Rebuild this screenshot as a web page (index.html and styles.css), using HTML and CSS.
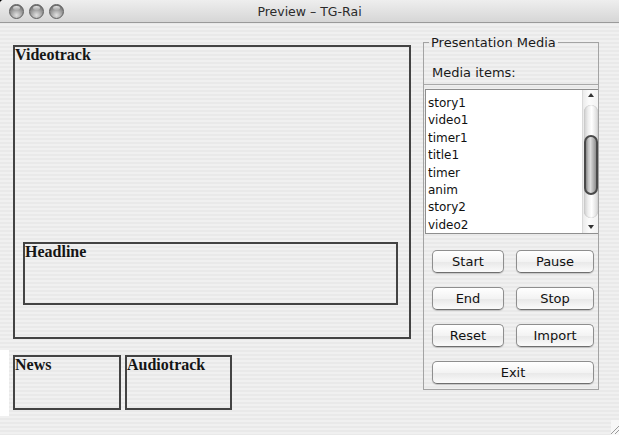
FILE: index.html
```html
<!DOCTYPE html>
<html lang="it">
<head>
<meta charset="utf-8">
<title>Preview – TG-Rai</title>
<link rel="stylesheet" href="styles.css">
</head>
<body>
<div class="window">
  <header class="titlebar">
    <div class="lights">
      <span class="light"></span>
      <span class="light"></span>
      <span class="light"></span>
    </div>
    <div class="title">Preview – TG-Rai</div>
  </header>

  <div class="content">
    <section class="stage">
      <div class="region videotrack">
        <span class="region-label">Videotrack</span>
        <div class="region headline">
          <span class="region-label">Headline</span>
        </div>
      </div>
      <div class="lower">
        <span class="edge"></span>
        <div class="region news"><span class="region-label">News</span></div>
        <div class="region audiotrack"><span class="region-label">Audiotrack</span></div>
      </div>
    </section>

    <fieldset class="media">
      <legend>Presentation Media</legend>
      <div class="items-head">Media items:</div>
      <div class="items">
        <ul class="item-list">
          <li>story1</li>
          <li>video1</li>
          <li>timer1</li>
          <li>title1</li>
          <li>timer</li>
          <li>anim</li>
          <li>story2</li>
          <li>video2</li>
        </ul>
        <div class="scrollbar">
          <span class="arrow up"></span>
          <div class="track"><div class="thumb"></div></div>
          <span class="arrow down"></span>
        </div>
      </div>
      <div class="controls">
        <button class="btn">Start</button>
        <button class="btn">Pause</button>
        <button class="btn">End</button>
        <button class="btn">Stop</button>
        <button class="btn">Reset</button>
        <button class="btn">Import</button>
        <button class="btn wide">Exit</button>
      </div>
    </fieldset>
  </div>

  <svg class="grip" width="8" height="15" viewBox="0 0 8 15">
    <rect width="8" height="15" fill="#f7f7f7"/>
    <line x1="8" y1="6" x2="0" y2="14" stroke="#9a9a9a" stroke-width="1"/>
    <line x1="8" y1="10" x2="4" y2="14" stroke="#9a9a9a" stroke-width="1"/>
  </svg>
</div>
</body>
</html>
```

FILE: styles.css
```css
html, body {
  margin: 0;
  padding: 0;
  background: #000;
}

.window {
  position: relative;
  width: 619px;
  height: 435px;
  overflow: hidden;
  border-top-left-radius: 4px;
  background: repeating-linear-gradient(to bottom, #f0f0f0 0 2px, #e9e9e9 2px 4px);
  font-family: "DejaVu Sans", "Noto Sans", sans-serif;
  color: #1a1a1a;
}

/* ---- title bar ---- */
.titlebar {
  height: 22px;
  border-bottom: 1px solid #9a9a9a;
  background: linear-gradient(to bottom, #eeeeee, #d6d6d6);
  display: grid;
  grid-template-columns: 1fr auto 1fr;
  align-items: center;
}

.lights {
  display: flex;
  gap: 5px;
  padding: 1px 0 0 9px;
}

.light {
  position: relative;
  width: 15px;
  height: 15px;
  box-sizing: border-box;
  border-radius: 50%;
  border: 1px solid #5f5f5f;
  background: radial-gradient(circle at 50% 78%, #e2e2e2 0, #b0b0b0 35%, #7d7d7d 70%, #616161 100%);
}

.light::before {
  content: "";
  position: absolute;
  left: 3px;
  top: 1px;
  width: 7px;
  height: 4px;
  border-radius: 50%;
  background: linear-gradient(to bottom, rgba(255,255,255,0.85), rgba(255,255,255,0.1));
}

.title {
  font-size: 12.5px;
  color: #2b2b2b;
  padding-top: 1px;
}

/* ---- main area ---- */
.content {
  display: flex;
  align-items: flex-start;
}

.stage {
  width: 411px;
  padding-top: 22px;
}

.region {
  box-sizing: border-box;
  border: 2px solid #434343;
}

.region-label {
  display: block;
  font: bold 16px/15px "Liberation Serif", "Times New Roman", serif;
  color: #151515;
}

.videotrack {
  margin-left: 13px;
  width: 398px;
  height: 294px;
  display: flex;
  flex-direction: column;
}

.headline {
  margin: auto 0 32px 8px;
  width: 375px;
  height: 63px;
}

.lower {
  display: flex;
  align-items: flex-start;
  margin-top: 11px;
}

.edge {
  width: 9px;
  height: 66px;
  background: #fff;
}

.news,
.audiotrack {
  margin: 5px 0 0 4px;
  height: 55px;
}

.news { width: 108px; }
.audiotrack { width: 107px; }

/* ---- presentation media group ---- */
.media {
  margin: 12px 0 0 12px;
  width: 176px;
  box-sizing: border-box;
  min-width: 0;
  padding: 0 0 5px;
  border: 1px solid #a3a3a3;
}

.media legend {
  margin-left: 5px;
  padding: 0 2px;
  font-size: 13px;
  line-height: 15px;
  color: #1a1a1a;
}

.items-head {
  padding: 15px 0 4px 8px;
  font-size: 13px;
  line-height: 15px;
  border-bottom: 1px solid #a9a9a9;
}

.items {
  margin: 4px 0 0 1px;
  height: 145px;
  box-sizing: border-box;
  border: 1px solid #8f8f8f;
  border-right: 0;
  background: #fff;
  display: flex;
}

.item-list {
  flex: 1;
  margin: 0;
  padding: 5px 0 0 2px;
  list-style: none;
  font-size: 12px;
  line-height: 17.4px;
  color: #111;
  overflow: hidden;
}

.scrollbar {
  width: 16px;
  box-sizing: border-box;
  border-left: 1px solid #dadada;
  display: flex;
  flex-direction: column;
  align-items: center;
  background: linear-gradient(to right, #ebebeb, #fbfbfb 40%, #f2f2f2);
}

.arrow {
  width: 0;
  height: 0;
  border-left: 3px solid transparent;
  border-right: 3px solid transparent;
}

.arrow.up {
  margin-top: 3px;
  border-bottom: 4px solid #333;
}

.arrow.down {
  margin-top: 7px;
  border-top: 4px solid #333;
}

.track {
  margin-top: 8px;
  width: 14px;
  height: 113px;
  border-radius: 7px;
  background: linear-gradient(to right, #cdcdcd, #efefef 30%, #ffffff 55%, #d6d6d6);
  box-shadow: inset 0 0 1px #9c9c9c;
}

.thumb {
  margin-top: 30px;
  width: 14px;
  height: 60px;
  box-sizing: border-box;
  border: 2px solid #4a4a4a;
  border-radius: 7px;
  background: linear-gradient(to right, #8a8a8a, #c4c4c4 25%, #dcdcdc 45%, #b8b8b8 70%, #8d8d8d);
}

.controls {
  display: grid;
  grid-template-columns: 72px 78px;
  column-gap: 12px;
  row-gap: 14px;
  margin: 16px 0 0 8px;
}

.btn {
  height: 23px;
  padding: 0;
  font-family: "DejaVu Sans", "Noto Sans", sans-serif;
  font-size: 13px;
  color: #111;
  border: 1px solid #8e8e8e;
  border-bottom-color: #6f6f6f;
  border-radius: 5px;
  background: linear-gradient(to bottom, #ffffff, #f3f3f3 50%, #e9e9e9 55%, #fbfbfb);
  box-shadow: 0 1px 1px rgba(0, 0, 0, 0.18);
}

.btn.wide {
  grid-column: 1 / -1;
}

.grip {
  position: absolute;
  right: 0;
  bottom: 0;
  display: block;
}
```
